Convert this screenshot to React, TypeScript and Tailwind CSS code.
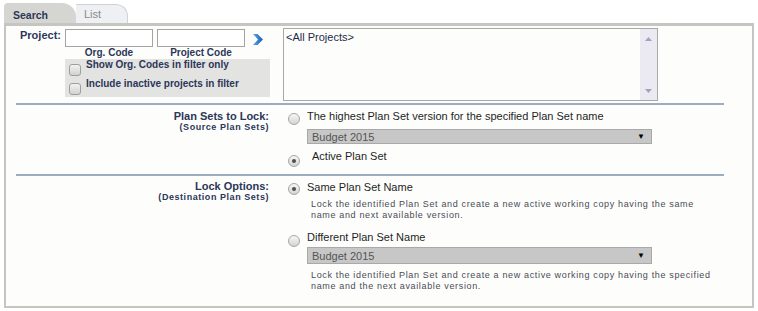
import type { ReactNode } from "react";

const NAVY = "text-[#2c3659]";

function Radio({ checked, className = "" }: { checked?: boolean; className?: string }) {
  return (
    <span
      className={`flex h-[12px] w-[12px] shrink-0 items-center justify-center rounded-full border border-[#a6a6a6] bg-linear-to-b from-[#f7f7f7] to-[#d4d4d4] ${className}`}
    >
      {checked && <span className="h-[4px] w-[4px] rounded-full bg-[#4f4f4f]" />}
    </span>
  );
}

function Checkbox() {
  return (
    <span className="mt-[5px] ml-[4px] h-[12px] w-[12px] shrink-0 rounded-[3px] border border-[#9e9e9e] bg-linear-to-b from-[#f2f2f2] to-[#d2d2d2]" />
  );
}

function PlanSelect({ className = "" }: { className?: string }) {
  return (
    <div
      className={`ml-[38px] flex w-[345px] items-center justify-between border border-[#a9a9a9] bg-[#c7c7c7] pr-[6px] pl-[4px] text-[11px] leading-[12px] text-[#555] ${className}`}
    >
      <span>Budget 2015</span>
      <span className="text-[8px] text-black">▼</span>
    </div>
  );
}

function Desc({ children, className = "" }: { children: ReactNode; className?: string }) {
  return (
    <p className={`ml-[42px] w-[406px] text-[9px] leading-[11px] tracking-[0.65px] text-[#4a4b55] ${className}`}>
      {children}
    </p>
  );
}

function SectionLabel({ title, sub }: { title: string; sub: string }) {
  return (
    <div className={`w-[263px] shrink-0 text-right font-bold ${NAVY}`}>
      <div className="text-[11px] leading-[12px]">{title}</div>
      <div className="text-[9px] leading-[11px] tracking-[0.55px]">{sub}</div>
    </div>
  );
}

function Separator() {
  return <div className="ml-[10px] h-[2px] w-[708px] bg-[#9dadc0]" />;
}

export default function App() {
  return (
    <div className="h-[311px] w-[758px] bg-white font-['Liberation_Sans',Arial,sans-serif]">
      {/* tabs */}
      <div className="flex h-[23px] items-end pl-[4px]">
        <div className="h-[20px] w-[72px] rounded-tl-[4px] rounded-tr-[14px] bg-[#d5d6d2] pt-[6px] pl-[9px] text-[10.5px] leading-[12px] font-bold text-[#2c3659]">
          Search
        </div>
        <div className="h-[19px] w-[52px] rounded-tr-[12px] border-t border-r border-[#cfd3d8] bg-[#eef0f3] pt-[3px] pl-[8px] text-[11px] leading-[12px] text-[#8a8a8a]">
          List
        </div>
      </div>

      {/* panel */}
      <div className="ml-[4px] h-[285px] w-[750px] border-2 border-t-[3px] border-[#c5c6c2] bg-[#fdfefc]">
        {/* project filter */}
        <div className="flex h-[77px]">
          <div className={`mt-[3px] w-[59px] shrink-0 pl-[14px] text-[11px] leading-[12px] font-bold ${NAVY}`}>
            Project:
          </div>
          <div className="w-[205px] shrink-0">
            <div className="mt-[3px] flex items-start">
              <div className="h-[18px] w-[88px] border border-[#a4a4a4] bg-white" />
              <div className="ml-[4px] h-[18px] w-[88px] border border-[#a4a4a4] bg-white" />
              <svg className="mt-[5px] ml-[8px]" width="10" height="11" viewBox="0 0 10 11">
                <defs>
                  <linearGradient id="chev" x1="0" y1="0" x2="1" y2="0">
                    <stop offset="0" stopColor="#5ba3ea" />
                    <stop offset="1" stopColor="#1b5fb2" />
                  </linearGradient>
                </defs>
                <polygon points="0,0 4.5,0 10,5.5 4.5,11 0,11 5,5.5" fill="url(#chev)" />
              </svg>
            </div>
            <div className={`flex h-[12px] text-[10px] leading-[12px] font-bold ${NAVY}`}>
              <span className="w-[88px] text-center">Org. Code</span>
              <span className="ml-[4px] w-[88px] text-center">Project Code</span>
            </div>
            <div className={`h-[38px] bg-[#e3e3e1] text-[10px] leading-[12px] font-bold ${NAVY}`}>
              <div className="flex h-[19px] items-start">
                <Checkbox />
                <span className="ml-[5px]">Show Org. Codes in filter only</span>
              </div>
              <div className="flex h-[19px] items-start">
                <Checkbox />
                <span className="ml-[5px]">Include inactive projects in filter</span>
              </div>
            </div>
          </div>
          <div className="mt-[2px] ml-[13px] flex h-[73px] w-[375px] border border-[#a8a8a8] bg-[#fdfefc]">
            <div className="flex-1 pt-[2px] pl-[2px] text-[11px] leading-[13px] text-[#1d2b48]">
              &lt;All Projects&gt;
            </div>
            <div className="flex w-[17px] flex-col items-center justify-between bg-[#ebeaf3] pt-[8px] pb-[7px]">
              <svg width="7" height="4" viewBox="0 0 7 4">
                <polygon points="3.5,0 7,4 0,4" fill="#a89fc0" />
              </svg>
              <svg width="7" height="4" viewBox="0 0 7 4">
                <polygon points="0,0 7,0 3.5,4" fill="#a89fc0" />
              </svg>
            </div>
          </div>
        </div>

        <Separator />

        {/* plan sets to lock */}
        <div className="flex h-[69px] pt-[5px]">
          <SectionLabel title="Plan Sets to Lock:" sub="(Source Plan Sets)" />
          <div className="flex-1">
            <div className="flex h-[15px] items-start">
              <Radio className="mt-[3px] ml-[19px]" />
              <span className="ml-[7px] text-[11px] leading-[12px] text-[#1e1e1e]">
                The highest Plan Set version for the specified Plan Set name
              </span>
            </div>
            <PlanSelect className="mt-[4px] h-[15px]" />
            <div className="mt-[6px] flex items-start">
              <Radio checked className="mt-[5px] ml-[19px]" />
              <span className="ml-[12px] text-[11px] leading-[12px] text-[#1e1e1e]">Active Plan Set</span>
            </div>
          </div>
        </div>

        <Separator />

        {/* lock options */}
        <div className="flex pt-[4px]">
          <SectionLabel title="Lock Options:" sub="(Destination Plan Sets)" />
          <div className="flex-1 pt-[1px]">
            <div className="flex h-[14px] items-start">
              <Radio checked className="mt-[2px] ml-[19px]" />
              <span className="ml-[7px] text-[11px] leading-[12px] text-[#1e1e1e]">Same Plan Set Name</span>
            </div>
            <Desc className="mt-[4px]">
              Lock the identified Plan Set and create a new active working copy having the same name and next
              available version.
            </Desc>
            <div className="mt-[10px] flex h-[16px] items-start">
              <Radio className="mt-[4px] ml-[19px]" />
              <span className="ml-[7px] text-[11px] leading-[12px] text-[#1e1e1e]">Different Plan Set Name</span>
            </div>
            <PlanSelect className="h-[17px]" />
            <Desc className="mt-[6px]">
              Lock the identified Plan Set and create a new active working copy having the specified name and the
              next available version.
            </Desc>
          </div>
        </div>
      </div>
    </div>
  );
}
